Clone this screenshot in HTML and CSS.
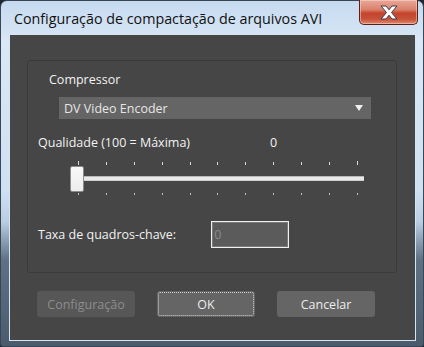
FILE: index.html
```html
<!DOCTYPE html>
<html lang="pt">

<head>
    <meta charset="UTF-8">
    <title>Configuração de compactação de arquivos AVI</title>
    <link rel="stylesheet" href="styles.css">
</head>

<body>
    <div class="window">
        <div class="title-bar">
            <span class="title">Configuração de compactação de arquivos AVI</span>
            <button class="close-btn" aria-label="Fechar">
                <svg width="20" height="15" viewBox="0 0 20 15">
                    <path d="M2 1 L7 1 L10 4.8 L13 1 L18 1 L12.5 7.5 L18 14 L13 14 L10 10.2 L7 14 L2 14 L7.5 7.5 Z"
                        fill="#ffffff" stroke="#3b3b4a" stroke-width="1" stroke-linejoin="round" />
                </svg>
            </button>
        </div>
        <div class="client">
            <div class="group-box">
                <div class="field-label compressor-label">Compressor</div>
                <div class="select">
                    <span>DV Video Encoder</span>
                    <span class="select-arrow"></span>
                </div>

                <div class="quality-row">
                    <span class="field-label">Qualidade (100 = Máxima)</span>
                    <span class="field-label quality-value">0</span>
                </div>

                <div class="slider">
                    <div class="ticks ticks-top">
                        <i class="long"></i><i></i><i></i><i></i><i></i><i></i><i></i><i></i><i></i><i></i><i class="long"></i>
                    </div>
                    <div class="track"></div>
                    <div class="thumb"></div>
                    <div class="ticks ticks-bottom">
                        <i></i><i></i><i></i><i></i><i></i><i></i><i></i><i></i><i></i><i></i><i></i>
                    </div>
                </div>

                <div class="keyframe-row">
                    <span class="field-label">Taxa de quadros-chave:</span>
                    <input class="keyframe-input" type="text" value="0" disabled>
                </div>
            </div>

            <div class="buttons">
                <button class="btn btn-disabled" disabled>Configuração</button>
                <button class="btn btn-focus">OK</button>
                <button class="btn">Cancelar</button>
            </div>
        </div>
    </div>
</body>

</html>
```

FILE: styles.css
```css
body {
    margin: 0;
    padding: 0;
    background: #1e2630;
    font-family: 'Open Sans', 'Noto Sans', sans-serif;
}

.window {
    width: 424px;
    height: 347px;
    box-sizing: border-box;
    display: flex;
    flex-direction: column;
    padding: 0 7px 5px 8px;
    border: 1px solid #3a4656;
    border-radius: 7px 7px 3px 3px;
    background: linear-gradient(to bottom, #c6daf0 0%, #d9e7f6 12%, #cfe0f3 55%, #b9cde3 64%, #5e7185 75%, #4a5b6d 100%);
}

.title-bar {
    height: 33px;
    display: flex;
    justify-content: space-between;
    align-items: flex-start;
}

.title {
    margin: 8px 0 0 5px;
    font-size: 14.3px;
    color: #111;
    line-height: 20px;
}

.close-btn {
    width: 59px;
    height: 25px;
    margin: -1px -2px 0 0;
    padding: 0;
    border: 1px solid #5b2118;
    border-top: none;
    border-radius: 0 0 5px 5px;
    background: linear-gradient(to bottom, #e9a898 0%, #d9816c 40%, #c4432c 55%, #c8523a 80%, #df8a70 100%);
    box-shadow: inset 0 0 0 1px rgba(255, 220, 210, 0.5);
    display: flex;
    justify-content: center;
    align-items: center;
}

.client {
    flex: 1;
    border: 1px solid #d6e3f1;
    background: #464646;
    padding: 25px 18px 0 17px;
    display: flex;
    flex-direction: column;
}

.group-box {
    height: 213px;
    box-sizing: border-box;
    border: 1px solid #3a3a3a;
    border-radius: 3px;
    padding: 10px 0 0 10px;
}

.field-label {
    font-size: 12.5px;
    color: #f2f2f2;
    line-height: 17px;
}

.compressor-label {
    margin-left: 11px;
}

.select {
    margin: 9px 25px 0 21px;
    height: 22px;
    background: #656565;
    display: flex;
    justify-content: space-between;
    align-items: center;
    padding: 0 8px 0 5px;
    font-size: 12.5px;
    color: #e6e6e6;
}

.select-arrow {
    width: 0;
    height: 0;
    border-left: 4px solid transparent;
    border-right: 4px solid transparent;
    border-top: 6px solid #f0f0f0;
}

.quality-row {
    margin-top: 15px;
    display: flex;
}

.quality-value {
    margin-left: 80px;
}

.slider {
    position: relative;
    margin: 10px 0 0 40px;
    width: 280px;
}

.ticks {
    display: flex;
    justify-content: space-between;
    padding: 0;
}

.ticks i {
    width: 1px;
    background: #d8d8d8;
}

.ticks-top {
    height: 4px;
    align-items: flex-end;
}

.ticks-top i {
    height: 3px;
}

.ticks-top i.long {
    height: 4px;
}

.track {
    margin: 11px 0 0 -5px;
    height: 5px;
    width: 291px;
    box-sizing: border-box;
    background: #e8e8e8;
    border-top: 1px solid #b8b8b8;
    border-bottom: 1px solid #cfcfcf;
}

.thumb {
    position: absolute;
    left: -8px;
    top: 5px;
    width: 14px;
    height: 26px;
    box-sizing: border-box;
    background: linear-gradient(to bottom, #f8f8f8, #ececec);
    border: 1px solid #8c8c8c;
    border-radius: 2px;
}

.ticks-bottom {
    margin-top: 12px;
    height: 2px;
}

.ticks-bottom i {
    height: 2px;
    background: #bdbdbd;
}

.keyframe-row {
    margin-top: 26px;
    display: flex;
    align-items: center;
}

.keyframe-input {
    margin-left: 35px;
    width: 78px;
    height: 27px;
    box-sizing: border-box;
    border: 1px solid #f0f0f0;
    box-shadow: inset 0 0 0 1px #7a7a7a;
    background: #5b5b5b;
    color: #8a8a8a;
    font-family: inherit;
    font-size: 12.5px;
    padding: 0 2px;
    outline: none;
}

.buttons {
    margin-top: 18px;
    display: flex;
    gap: 22px;
    padding-left: 10px;
}

.btn {
    width: 98px;
    height: 26px;
    border: none;
    border-radius: 3px;
    background: #656565;
    color: #ececec;
    font-family: inherit;
    font-size: 12.5px;
    padding: 0;
}

.btn-disabled {
    background: #575757;
    color: #8c8c8c;
}

.btn-focus {
    outline: 1px dotted #d0d0d0;
    outline-offset: -2px;
}
```
